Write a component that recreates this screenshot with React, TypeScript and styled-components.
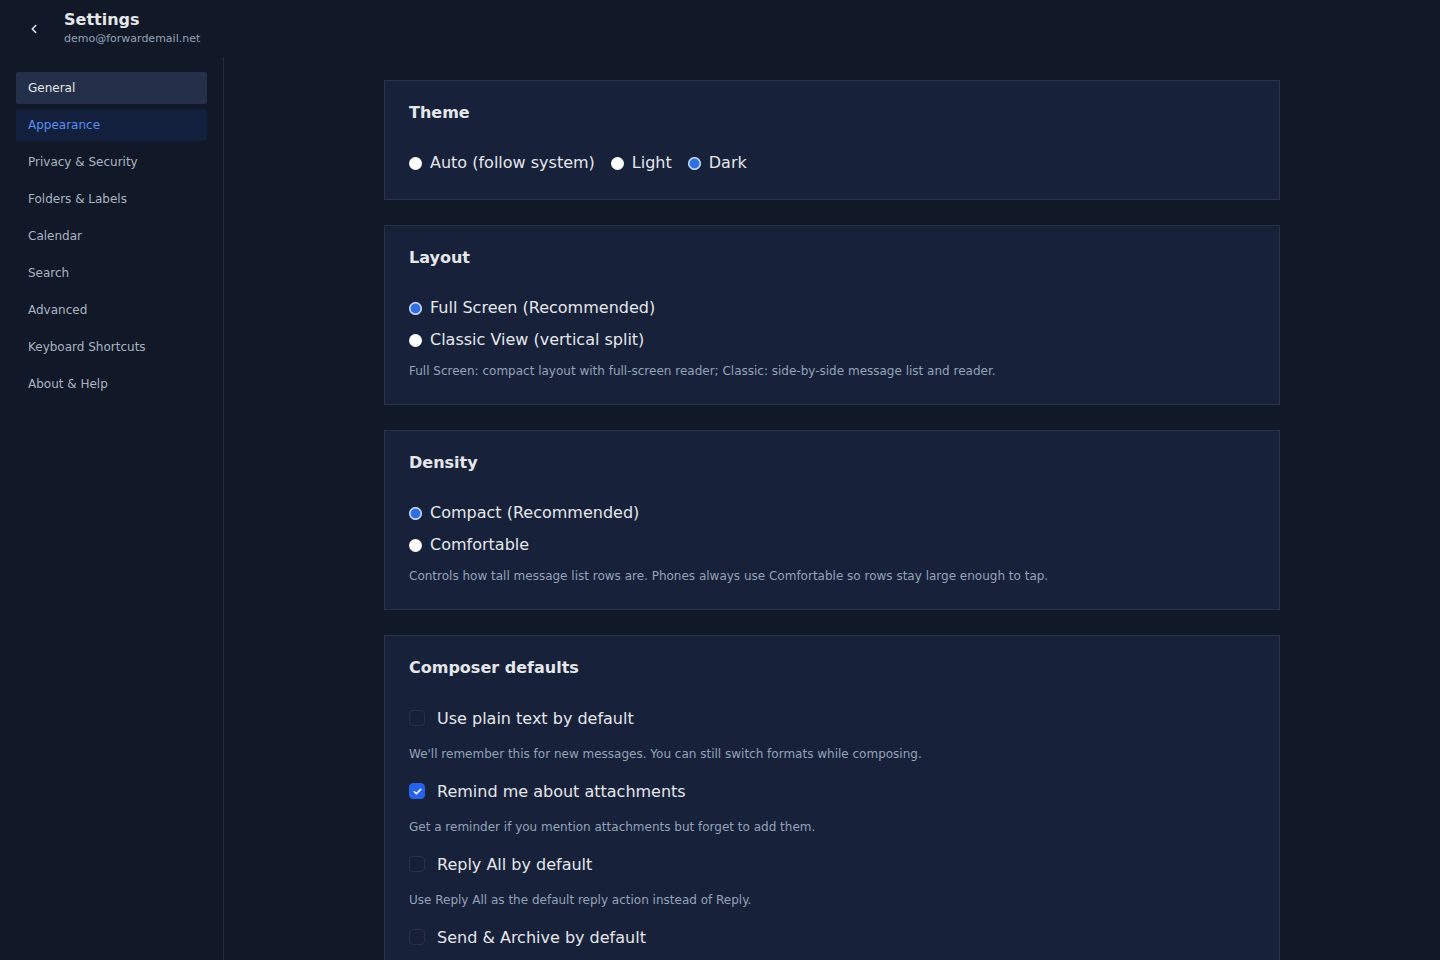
import React, { useState } from "react";
import styled, { createGlobalStyle } from "styled-components";

const GlobalStyle = createGlobalStyle`
  html, body {
    margin: 0;
    padding: 0;
    background: #111827;
    font-family: "DejaVu Sans", "Noto Sans", sans-serif;
    color: #e5e7eb;
  }
  * { box-sizing: border-box; }
`;

const Shell = styled.div`
  height: 100vh;
  display: flex;
  flex-direction: column;
  overflow: hidden;
`;

const TopBar = styled.header`
  height: 57px;
  flex-shrink: 0;
  display: flex;
  align-items: center;
  gap: 20px;
  padding: 0 20px 0 24px;
`;

const BackButton = styled.button`
  width: 20px;
  height: 20px;
  padding: 0;
  border: none;
  background: transparent;
  color: #e5e7eb;
  display: flex;
  align-items: center;
  justify-content: center;
  cursor: pointer;
`;

const TitleBlock = styled.div`
  display: flex;
  flex-direction: column;
  gap: 2px;
  margin-top: -1px;
`;

const PageTitle = styled.div`
  font-size: 16px;
  font-weight: 700;
  color: #e5e7eb;
  line-height: 20px;
`;

const Email = styled.div`
  font-size: 11px;
  color: #94a3b8;
  line-height: 14px;
`;

const Body = styled.div`
  flex: 1;
  display: flex;
  min-height: 0;
`;

const Sidebar = styled.nav`
  width: 224px;
  flex-shrink: 0;
  border-right: 1px solid #1f2a3d;
  padding: 15px 16px;
  display: flex;
  flex-direction: column;
  gap: 5px;
`;

const NavItem = styled.div<{ $state?: "active" | "current" }>`
  height: 32px;
  display: flex;
  align-items: center;
  padding: 0 12px 1px;
  font-size: 12px;
  border-radius: 2px;
  cursor: pointer;
  color: ${p =>
    p.$state === "active" ? "#e5e7eb" : p.$state === "current" ? "#5b8def" : "#aab4c3"};
  background: ${p =>
    p.$state === "active" ? "#243049" : p.$state === "current" ? "#12203e" : "transparent"};
`;

const Main = styled.main`
  flex: 1;
  overflow: hidden;
  padding: 23px 24px 24px;
`;

const Column = styled.div`
  max-width: 896px;
  margin: 0 auto;
  display: flex;
  flex-direction: column;
  gap: 25px;
`;

const Card = styled.section`
  background: #17213a;
  border: 1px solid #263249;
  padding: 21px 24px 24px;
`;

const CardTitle = styled.h2`
  margin: 0 0 26px;
  font-size: 16px;
  line-height: 22px;
  font-weight: 700;
  color: #e5e7eb;
`;

const RadioRow = styled.div<{ $inline?: boolean }>`
  display: flex;
  flex-direction: ${p => (p.$inline ? "row" : "column")};
  gap: ${p => (p.$inline ? "16px" : "8px")};
  min-height: ${p => (p.$inline ? "25px" : "0")};
`;

const OptionLabel = styled.label`
  display: flex;
  align-items: center;
  gap: 8px;
  height: 24px;
  font-size: 16px;
  color: #e5e7eb;
  cursor: pointer;
`;

const Radio = styled.span<{ $checked: boolean }>`
  width: 13px;
  height: 13px;
  border-radius: 50%;
  flex-shrink: 0;
  margin-top: 2px;
  background: ${p => (p.$checked ? "#2f6fe0" : "#ffffff")};
  box-shadow: ${p => (p.$checked ? "inset 0 0 0 1.5px #d3def5" : "none")};
`;

const Help = styled.p`
  margin: 11px 0 0;
  font-size: 12px;
  line-height: 18px;
  color: #94a3b8;
`;

const CheckGroup = styled.div`
  display: flex;
  flex-direction: column;
  gap: 15px;
`;

const CheckItem = styled.div`
  display: flex;
  flex-direction: column;
  gap: 14px;
`;

const CheckLabel = styled.label`
  display: flex;
  align-items: center;
  gap: 12px;
  height: 26px;
  font-size: 16px;
  color: #e5e7eb;
  cursor: pointer;
`;

const Box = styled.span<{ $checked: boolean }>`
  width: 16px;
  height: 16px;
  border-radius: 4px;
  flex-shrink: 0;
  display: flex;
  align-items: center;
  justify-content: center;
  background: ${p => (p.$checked ? "#2563eb" : "#172037")};
  border: 1px solid ${p => (p.$checked ? "#2563eb" : "#26314a")};
`;

const CheckHelp = styled.p`
  margin: 0;
  font-size: 12px;
  line-height: 18px;
  color: #94a3b8;
`;

const navItems = [
  "General",
  "Appearance",
  "Privacy & Security",
  "Folders & Labels",
  "Calendar",
  "Search",
  "Advanced",
  "Keyboard Shortcuts",
  "About & Help",
];

type Opt = { value: string; label: string };

function RadioGroup({
  options,
  value,
  onChange,
  inline,
}: {
  options: Opt[];
  value: string;
  onChange: (v: string) => void;
  inline?: boolean;
}) {
  return (
    <RadioRow $inline={inline}>
      {options.map(o => (
        <OptionLabel key={o.value} onClick={() => onChange(o.value)}>
          <Radio $checked={value === o.value} />
          {o.label}
        </OptionLabel>
      ))}
    </RadioRow>
  );
}

const composerOptions = [
  {
    key: "plain",
    label: "Use plain text by default",
    help: "We'll remember this for new messages. You can still switch formats while composing.",
  },
  {
    key: "attach",
    label: "Remind me about attachments",
    help: "Get a reminder if you mention attachments but forget to add them.",
  },
  {
    key: "replyAll",
    label: "Reply All by default",
    help: "Use Reply All as the default reply action instead of Reply.",
  },
  {
    key: "sendArchive",
    label: "Send & Archive by default",
    help: "Archive the conversation automatically after you send a reply.",
  },
];

export default function App() {
  const [theme, setTheme] = useState("dark");
  const [layout, setLayout] = useState("full");
  const [density, setDensity] = useState("compact");
  const [checks, setChecks] = useState<Record<string, boolean>>({
    plain: false,
    attach: true,
    replyAll: false,
    sendArchive: false,
  });

  return (
    <Shell>
      <GlobalStyle />
      <TopBar>
        <BackButton aria-label="Back">
          <svg width="14" height="14" viewBox="0 0 24 24" fill="none" stroke="currentColor" strokeWidth="2.6" strokeLinecap="round" strokeLinejoin="round">
            <path d="M15 18l-6-6 6-6" />
          </svg>
        </BackButton>
        <TitleBlock>
          <PageTitle>Settings</PageTitle>
          <Email>demo@forwardemail.net</Email>
        </TitleBlock>
      </TopBar>
      <Body>
        <Sidebar>
          {navItems.map(n => (
            <NavItem
              key={n}
              $state={n === "General" ? "active" : n === "Appearance" ? "current" : undefined}
            >
              {n}
            </NavItem>
          ))}
        </Sidebar>
        <Main>
          <Column>
            <Card>
              <CardTitle>Theme</CardTitle>
              <RadioGroup
                inline
                value={theme}
                onChange={setTheme}
                options={[
                  { value: "auto", label: "Auto (follow system)" },
                  { value: "light", label: "Light" },
                  { value: "dark", label: "Dark" },
                ]}
              />
            </Card>
            <Card>
              <CardTitle>Layout</CardTitle>
              <RadioGroup
                value={layout}
                onChange={setLayout}
                options={[
                  { value: "full", label: "Full Screen (Recommended)" },
                  { value: "classic", label: "Classic View (vertical split)" },
                ]}
              />
              <Help>
                Full Screen: compact layout with full-screen reader; Classic: side-by-side message list and reader.
              </Help>
            </Card>
            <Card>
              <CardTitle>Density</CardTitle>
              <RadioGroup
                value={density}
                onChange={setDensity}
                options={[
                  { value: "compact", label: "Compact (Recommended)" },
                  { value: "comfortable", label: "Comfortable" },
                ]}
              />
              <Help>
                Controls how tall message list rows are. Phones always use Comfortable so rows stay large enough to tap.
              </Help>
            </Card>
            <Card>
              <CardTitle>Composer defaults</CardTitle>
              <CheckGroup>
                {composerOptions.map(c => (
                  <CheckItem key={c.key}>
                    <CheckLabel onClick={() => setChecks(s => ({ ...s, [c.key]: !s[c.key] }))}>
                      <Box $checked={checks[c.key]}>
                        {checks[c.key] && (
                          <svg width="11" height="11" viewBox="0 0 24 24" fill="none" stroke="#fff" strokeWidth="3.5" strokeLinecap="round" strokeLinejoin="round">
                            <path d="M5 12.5l4.5 4.5L19 7.5" />
                          </svg>
                        )}
                      </Box>
                      {c.label}
                    </CheckLabel>
                    <CheckHelp>{c.help}</CheckHelp>
                  </CheckItem>
                ))}
              </CheckGroup>
            </Card>
          </Column>
        </Main>
      </Body>
    </Shell>
  );
}
